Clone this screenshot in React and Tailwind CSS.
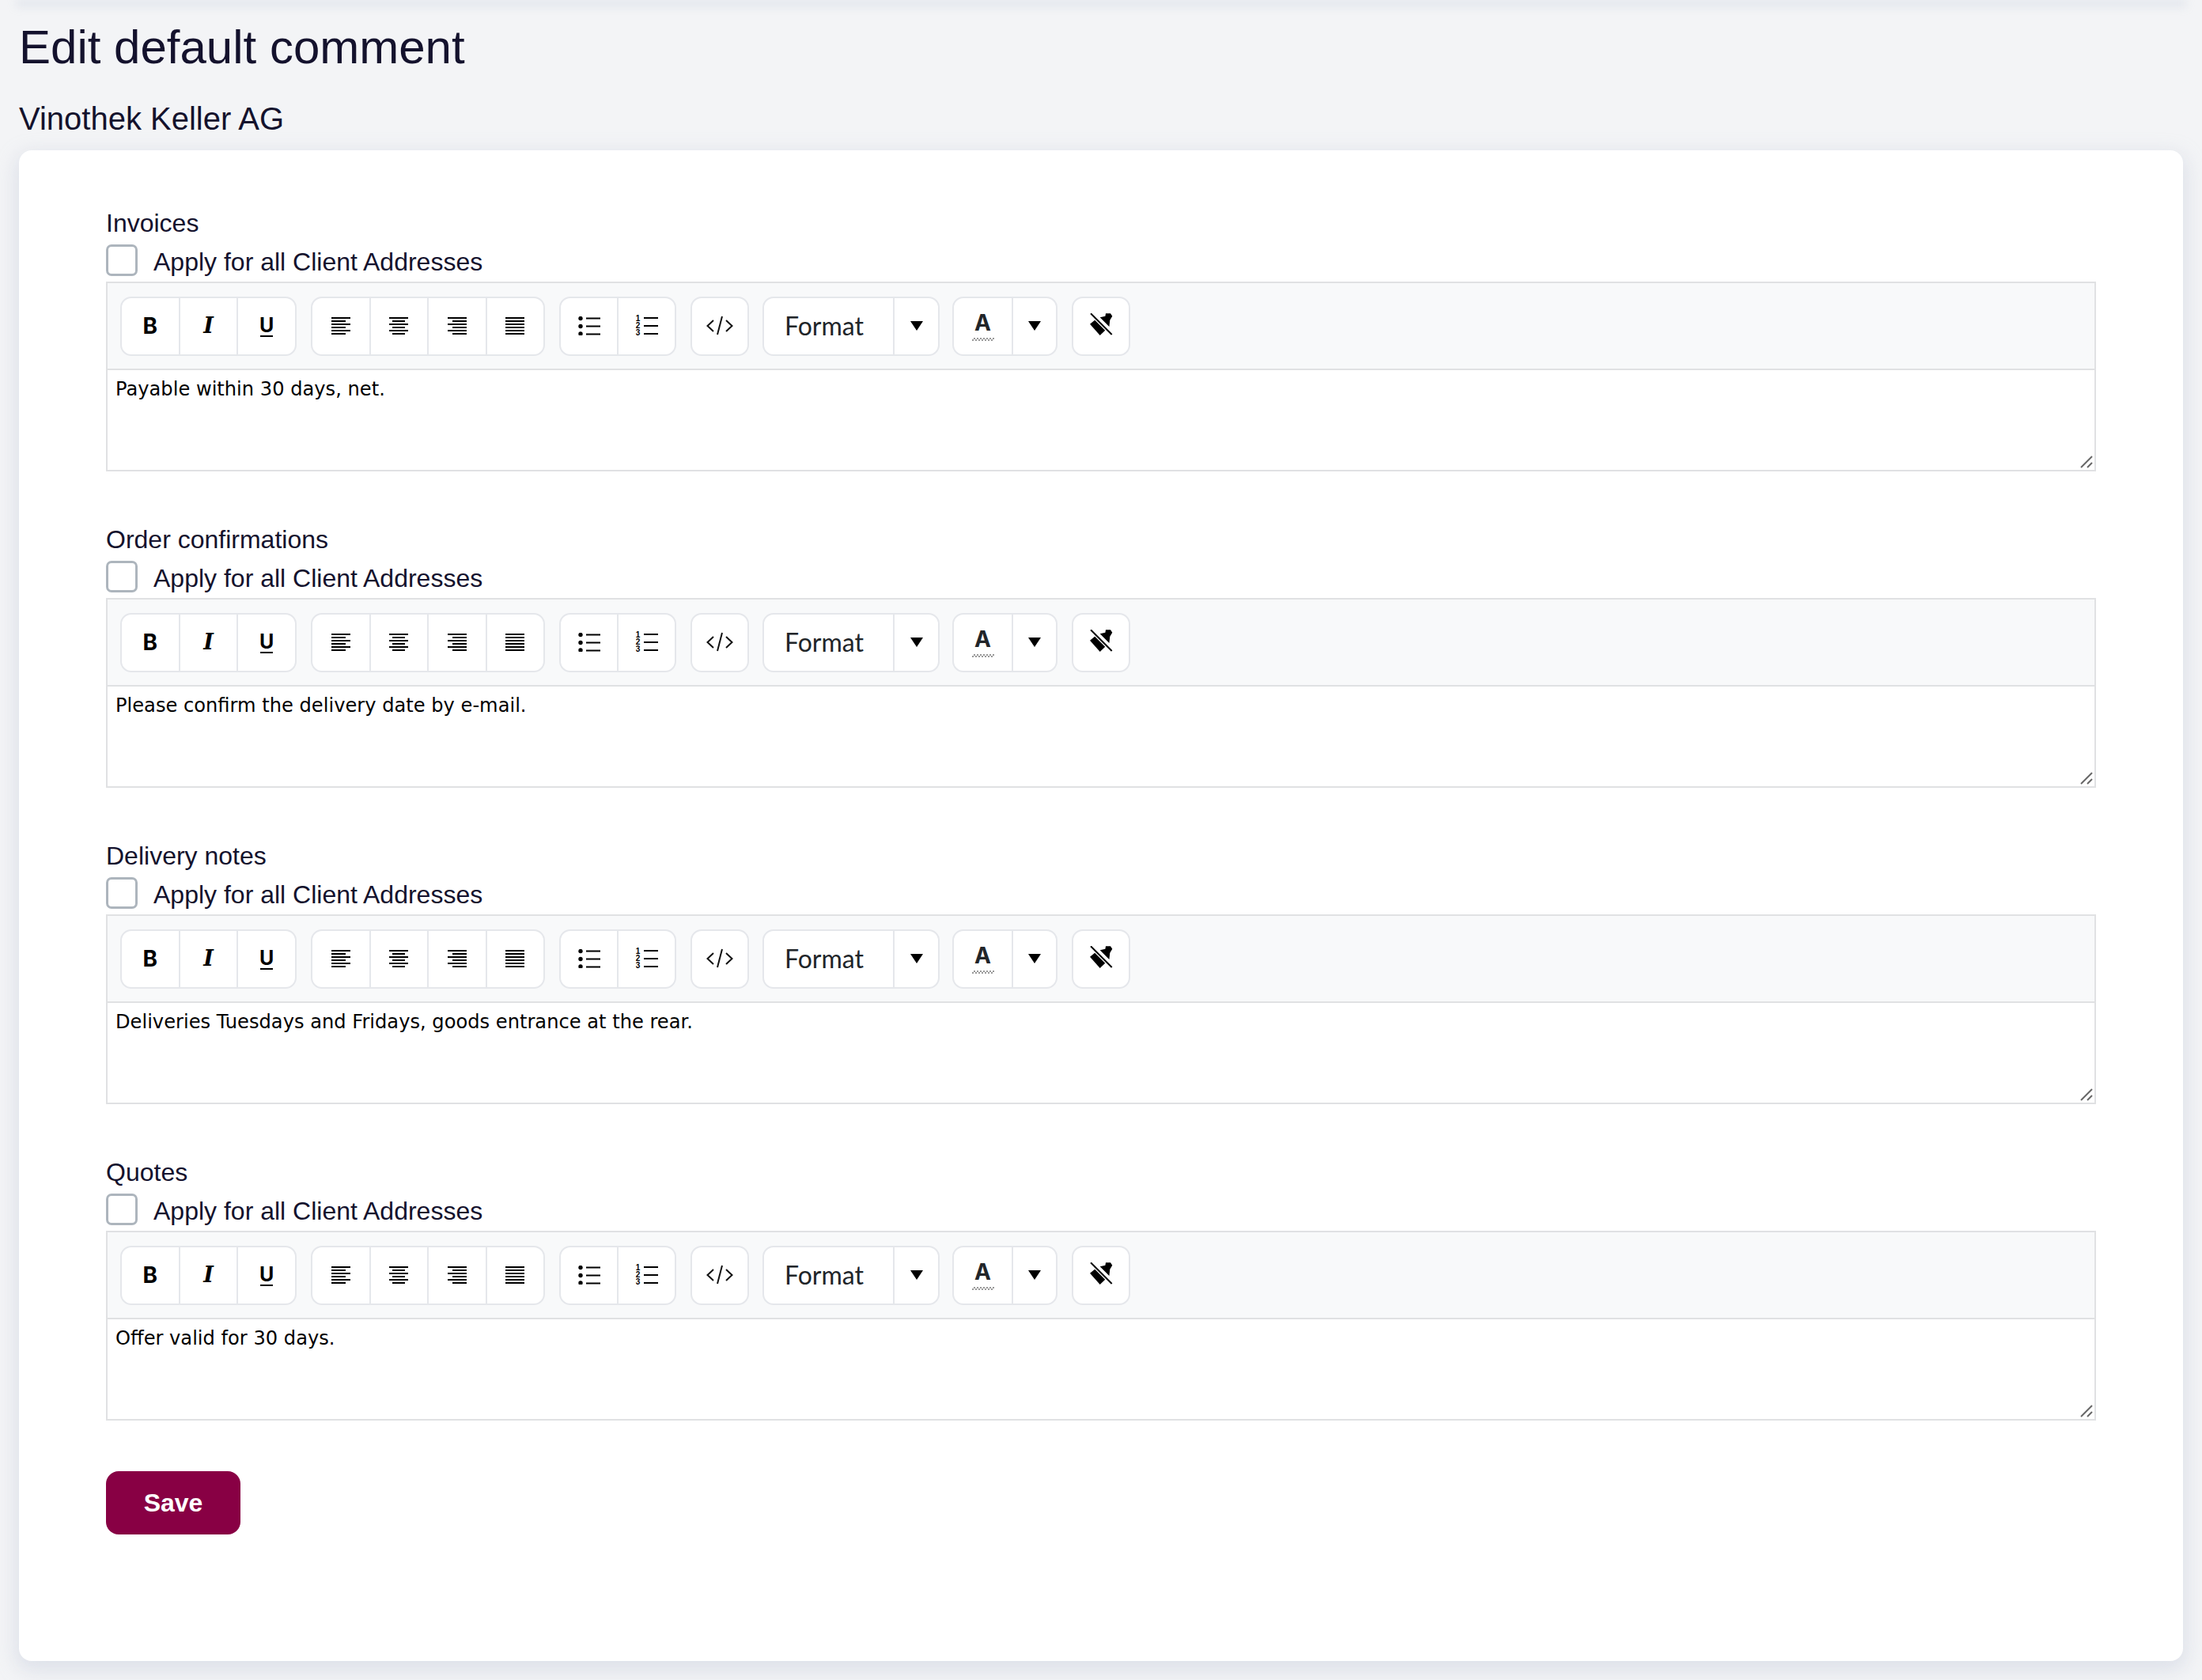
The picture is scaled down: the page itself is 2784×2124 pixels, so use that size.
import React from "react";

const sections = [
  { label: "Invoices", text: "Payable within 30 days, net." },
  { label: "Order confirmations", text: "Please confirm the delivery date by e-mail." },
  { label: "Delivery notes", text: "Deliveries Tuesdays and Fridays, goods entrance at the rear." },
  { label: "Quotes", text: "Offer valid for 30 days." },
];

const Lines = ({ rows }) => (
  <svg width="24" height="22" viewBox="0 0 24 22" fill="#000">
    {rows.map(([x, w], i) => (
      <rect key={i} x={x} y={i * 4} width={w} height="2" />
    ))}
  </svg>
);

const UlIcon = () => (
  <svg width="28" height="24" viewBox="0 0 28 24" fill="#000">
    <circle cx="3" cy="2.500" r="2.700" />
    <circle cx="3" cy="12.500" r="2.700" />
    <circle cx="3" cy="22" r="2.700" />
    <rect x="10" y="1.500" width="18" height="2" />
    <rect x="10" y="11.500" width="18" height="2" />
    <rect x="10" y="21.500" width="18" height="2" />
  </svg>
);

const OlIcon = () => (
  <div className="flex h-[26px] items-stretch gap-[4px]">
    <div className="flex w-[6px] flex-col items-center justify-between font-['Liberation_Sans',sans-serif] text-[10px] leading-[8px] font-bold text-black">
      <span>1</span>
      <span>2</span>
      <span>3</span>
    </div>
    <svg width="18" height="26" viewBox="0 0 18 26" fill="#000">
      <rect y="2" width="18" height="2" />
      <rect y="12" width="18" height="2" />
      <rect y="22" width="18" height="2" />
    </svg>
  </div>
);

const CodeIcon = () => (
  <svg width="34" height="26" viewBox="0 0 34 26" fill="none" stroke="#111" strokeWidth="2">
    <path d="M9 6 1.500 13 9 20" />
    <path d="M25 6l7.500 7L25 20" />
    <path d="M20 1l-6 23" />
  </svg>
);

const Caret = () => (
  <svg width="16" height="12" viewBox="0 0 16 12" fill="#000">
    <path d="M0 0h16L8 12z" />
  </svg>
);

const WavyLine = () => (
  <svg width="28" height="4" viewBox="0 0 28 4" fill="#999" className="mt-[4px]">
    {[...Array(14).keys()].map((i) => (
      <rect key={i} x={i * 2} y={i % 2 ? 0 : 2} width="2" height="2" />
    ))}
  </svg>
);

const EraserIcon = () => (
  <svg width="30" height="30" viewBox="0 0 30 30" fill="#000" className="mt-[-2px] ml-[2px]">
    <path d="M0 13.700 7 8l13 13-7.300 7z" />
    <path d="M12.700 5.300 19.400 3.700 20 .3h6l2.300 3.400-3 5-.9 8.300z" />
    <path d="M0 -1 29 28" stroke="#fff" strokeWidth="5" />
    <path d="M1 .3 27.700 27" stroke="#000" strokeWidth="2" />
  </svg>
);

function Btn({ children, className = "" }) {
  return <div className={`flex h-full items-center justify-center ${className}`}>{children}</div>;
}

function Group({ children, className = "" }) {
  return (
    <div className={`flex h-[75px] divide-x-2 divide-[#e5e7eb] rounded-[14px] border-2 border-[#e5e7eb] bg-white ${className}`}>
      {children}
    </div>
  );
}

function Toolbar() {
  return (
    <div className="flex h-[110px] items-center gap-[18px] border-b-2 border-[#e0e1e3] bg-[#f8f9fa] pl-[16px]">
      <Group className="w-[223px]">
        <Btn className="flex-1 font-['Inter',sans-serif] text-[28px] font-bold text-black">B</Btn>
        <Btn className="flex-1 font-['DejaVu_Serif',serif] text-[27px] font-bold text-black italic">I</Btn>
        <Btn className="flex-1 flex-col">
          <span className="font-['Inter',sans-serif] text-[25px] leading-[24px] font-bold text-black">U</span>
          <span className="mt-[1px] h-[2px] w-[16px] bg-black"></span>
        </Btn>
      </Group>
      <Group className="w-[296px]">
        <Btn className="flex-1"><Lines rows={[[0, 24], [0, 18], [0, 24], [0, 18], [0, 24], [0, 18]]} /></Btn>
        <Btn className="flex-1"><Lines rows={[[0, 24], [4, 16], [0, 24], [4, 16], [0, 24], [4, 16]]} /></Btn>
        <Btn className="flex-1"><Lines rows={[[0, 24], [6, 18], [0, 24], [6, 18], [0, 24], [6, 18]]} /></Btn>
        <Btn className="flex-1"><Lines rows={[[0, 24], [0, 24], [0, 24], [0, 24], [0, 24], [0, 24]]} /></Btn>
      </Group>
      <Group className="w-[148px]">
        <Btn className="flex-1"><UlIcon /></Btn>
        <Btn className="flex-1"><OlIcon /></Btn>
      </Group>
      <Group className="w-[74px]">
        <Btn className="flex-1"><CodeIcon /></Btn>
      </Group>
      <Group className="ml-[-1px] w-[224px]">
        <Btn className="w-[165px] justify-start pl-[26px] font-['Lato',sans-serif] text-[32px] text-[#212529]">Format</Btn>
        <Btn className="flex-1"><Caret /></Btn>
      </Group>
      <Group className="ml-[-2px] w-[133px]">
        <Btn className="w-[75px] flex-col">
          <span className="font-['Inter',sans-serif] text-[28px] leading-[30px] font-bold text-[#222529]">A</span>
          <WavyLine />
        </Btn>
        <Btn className="flex-1"><Caret /></Btn>
      </Group>
      <Group className="w-[74px]">
        <Btn className="flex-1"><EraserIcon /></Btn>
      </Group>
    </div>
  );
}

function Editor({ text }) {
  return (
    <div className="border-2 border-[#e0e1e3]">
      <Toolbar />
      <div className="relative h-[126px] bg-white px-[10px] pt-[10px] font-['DejaVu_Sans',sans-serif] text-[24.15px] leading-[28px] text-black">
        {text}
        <svg className="absolute right-[2px] bottom-[2px]" width="16" height="16" viewBox="0 0 16 16" stroke="#666" strokeWidth="2">
          <path d="M1 15 15 1" />
          <path d="M9 15 15 9" />
        </svg>
      </div>
    </div>
  );
}

export default function App() {
  return (
    <div className="h-[2124px] overflow-hidden bg-[#f3f4f6] font-['Liberation_Sans',sans-serif] text-[#14122d]">
      <div className="mx-[24px] h-0 shadow-[0_4px_12px_4px_rgba(180,188,210,0.3)]"></div>
      <h1 className="ml-[24px] h-[118px] pt-[26px] text-[60px] leading-[68px]">Edit default comment</h1>
      <h2 className="ml-[24px] h-[72px] pt-[9px] text-[40px] leading-[46px]">Vinothek Keller AG</h2>
      <div className="mx-[24px] h-[1910px] rounded-[16px] bg-white px-[110px] pt-[72px] shadow-[0_8px_24px_4px_rgba(180,188,210,0.35)]">
        <div className="flex flex-col gap-[66px]">
          {sections.map((s) => (
            <div key={s.label}>
              <div className="h-[44px] text-[32px] leading-[40px]">{s.label}</div>
              <div className="flex h-[50px] items-center gap-[20px] pb-[4px]">
                <span className="h-[40px] w-[40px] rounded-[7px] border-[3px] border-[#adb5bd] bg-white"></span>
                <span className="pt-[4px] text-[32px] leading-[40px]">Apply for all Client Addresses</span>
              </div>
              <Editor text={s.text} />
            </div>
          ))}
        </div>
        <button className="mt-[64px] h-[80px] w-[170px] rounded-[16px] bg-[#880044] text-[32px] font-bold text-white">Save</button>
      </div>
    </div>
  );
}
